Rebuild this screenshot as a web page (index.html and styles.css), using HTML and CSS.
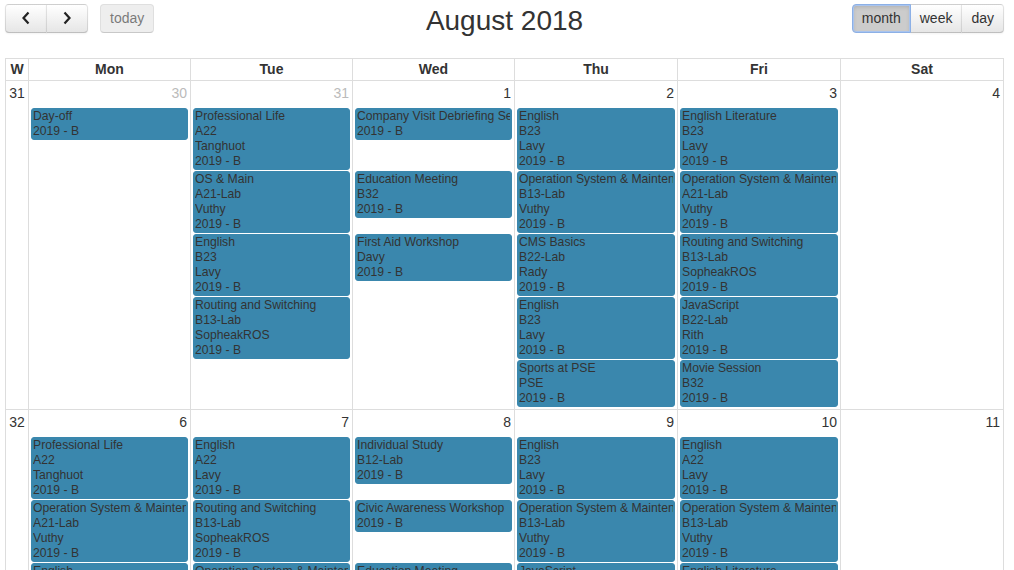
FILE: index.html
```html
<!DOCTYPE html>
<html lang="en">
<head>
<meta charset="utf-8">
<title>August 2018</title>
<link rel="stylesheet" href="styles.css">
</head>
<body>
<div class="page">
  <div class="toolbar">
    <div class="tb-left">
      <div class="btn-group">
        <button class="btn first icon-btn" aria-label="prev"><svg class="chev" width="10" height="14" viewBox="0 0 10 14"><polyline points="7.5,1.5 2.5,7 7.5,12.5" fill="none" stroke="#222" stroke-width="2.2"/></svg></button>
        <button class="btn last icon-btn" aria-label="next"><svg class="chev" width="10" height="14" viewBox="0 0 10 14"><polyline points="2.5,1.5 7.5,7 2.5,12.5" fill="none" stroke="#222" stroke-width="2.2"/></svg></button>
      </div>
      <button class="btn single disabled">today</button>
    </div>
    <h2 class="title">August 2018</h2>
    <div class="tb-right">
      <div class="btn-group">
        <button class="btn first active">month</button>
        <button class="btn">week</button>
        <button class="btn last">day</button>
      </div>
    </div>
  </div>

  <table class="cal">
    <colgroup>
      <col class="c-wk"><col class="c-162"><col class="c-162"><col class="c-162"><col class="c-163"><col class="c-163"><col>
    </colgroup>
    <thead>
      <tr><th class="wk">W</th><th>Mon</th><th>Tue</th><th>Wed</th><th>Thu</th><th>Fri</th><th>Sat</th></tr>
    </thead>
    <tbody>
      <!-- Week 31 -->
      <tr class="num-row">
        <td class="wk" rowspan="6">31</td>
        <td class="num other">30</td><td class="num other">31</td><td class="num">1</td><td class="num">2</td><td class="num">3</td><td class="num">4</td>
      </tr>
      <tr class="ev-row">
        <td><div class="ev"><span>Day-off</span><span>2019 - B</span></div></td>
        <td><div class="ev"><span>Professional Life</span><span>A22</span><span>Tanghuot</span><span>2019 - B</span></div></td>
        <td><div class="ev"><span>Company Visit Debriefing Session</span><span>2019 - B</span></div></td>
        <td><div class="ev"><span>English</span><span>B23</span><span>Lavy</span><span>2019 - B</span></div></td>
        <td><div class="ev"><span>English Literature</span><span>B23</span><span>Lavy</span><span>2019 - B</span></div></td>
        <td></td>
      </tr>
      <tr class="ev-row">
        <td></td>
        <td><div class="ev"><span>OS &amp; Main</span><span>A21-Lab</span><span>Vuthy</span><span>2019 - B</span></div></td>
        <td><div class="ev"><span>Education Meeting</span><span>B32</span><span>2019 - B</span></div></td>
        <td><div class="ev"><span>Operation System &amp; Maintenance</span><span>B13-Lab</span><span>Vuthy</span><span>2019 - B</span></div></td>
        <td><div class="ev"><span>Operation System &amp; Maintenance</span><span>A21-Lab</span><span>Vuthy</span><span>2019 - B</span></div></td>
        <td></td>
      </tr>
      <tr class="ev-row">
        <td></td>
        <td><div class="ev"><span>English</span><span>B23</span><span>Lavy</span><span>2019 - B</span></div></td>
        <td><div class="ev"><span>First Aid Workshop</span><span>Davy</span><span>2019 - B</span></div></td>
        <td><div class="ev"><span>CMS Basics</span><span>B22-Lab</span><span>Rady</span><span>2019 - B</span></div></td>
        <td><div class="ev"><span>Routing and Switching</span><span>B13-Lab</span><span>SopheakROS</span><span>2019 - B</span></div></td>
        <td></td>
      </tr>
      <tr class="ev-row">
        <td></td>
        <td><div class="ev"><span>Routing and Switching</span><span>B13-Lab</span><span>SopheakROS</span><span>2019 - B</span></div></td>
        <td></td>
        <td><div class="ev"><span>English</span><span>B23</span><span>Lavy</span><span>2019 - B</span></div></td>
        <td><div class="ev"><span>JavaScript</span><span>B22-Lab</span><span>Rith</span><span>2019 - B</span></div></td>
        <td></td>
      </tr>
      <tr class="ev-row last">
        <td></td>
        <td></td>
        <td></td>
        <td><div class="ev"><span>Sports at PSE</span><span>PSE</span><span>2019 - B</span></div></td>
        <td><div class="ev"><span>Movie Session</span><span>B32</span><span>2019 - B</span></div></td>
        <td></td>
      </tr>

      <!-- Week 32 -->
      <tr class="num-row">
        <td class="wk" rowspan="4">32</td>
        <td class="num">6</td><td class="num">7</td><td class="num">8</td><td class="num">9</td><td class="num">10</td><td class="num">11</td>
      </tr>
      <tr class="ev-row">
        <td><div class="ev"><span>Professional Life</span><span>A22</span><span>Tanghuot</span><span>2019 - B</span></div></td>
        <td><div class="ev"><span>English</span><span>A22</span><span>Lavy</span><span>2019 - B</span></div></td>
        <td><div class="ev"><span>Individual Study</span><span>B12-Lab</span><span>2019 - B</span></div></td>
        <td><div class="ev"><span>English</span><span>B23</span><span>Lavy</span><span>2019 - B</span></div></td>
        <td><div class="ev"><span>English</span><span>A22</span><span>Lavy</span><span>2019 - B</span></div></td>
        <td></td>
      </tr>
      <tr class="ev-row">
        <td><div class="ev"><span>Operation System &amp; Maintenance</span><span>A21-Lab</span><span>Vuthy</span><span>2019 - B</span></div></td>
        <td><div class="ev"><span>Routing and Switching</span><span>B13-Lab</span><span>SopheakROS</span><span>2019 - B</span></div></td>
        <td><div class="ev"><span>Civic Awareness Workshop</span><span>2019 - B</span></div></td>
        <td><div class="ev"><span>Operation System &amp; Maintenance</span><span>B13-Lab</span><span>Vuthy</span><span>2019 - B</span></div></td>
        <td><div class="ev"><span>Operation System &amp; Maintenance</span><span>B13-Lab</span><span>Vuthy</span><span>2019 - B</span></div></td>
        <td></td>
      </tr>
      <tr class="ev-row last">
        <td><div class="ev"><span>English</span><span>B23</span><span>Lavy</span><span>2019 - B</span></div></td>
        <td><div class="ev"><span>Operation System &amp; Maintenance</span><span>A21-Lab</span><span>Vuthy</span><span>2019 - B</span></div></td>
        <td><div class="ev"><span>Education Meeting</span><span>B32</span><span>2019 - B</span></div></td>
        <td><div class="ev"><span>JavaScript</span><span>B22-Lab</span><span>Rith</span><span>2019 - B</span></div></td>
        <td><div class="ev"><span>English Literature</span><span>B23</span><span>Lavy</span><span>2019 - B</span></div></td>
        <td></td>
      </tr>
    </tbody>
  </table>
</div>
</body>
</html>
```

FILE: styles.css
```css
html {
  overflow: hidden;
}

body {
  margin: 0;
  font-family: "Liberation Sans", Arial, sans-serif;
  font-size: 14px;
  color: #333;
  background: #fff;
}

.page {
  padding: 4px 10px 0 5px;
}

/* ---------- toolbar ---------- */
.toolbar {
  display: grid;
  grid-template-columns: 1fr auto 1fr;
  align-items: start;
  height: 54px;
}

.tb-left {
  display: flex;
  align-items: flex-start;
  gap: 12px;
}

.tb-right {
  justify-self: end;
  display: flex;
}

.title {
  margin: 0;
  font-size: 28px;
  font-weight: normal;
  line-height: 33px;
  color: #333;
}

.btn-group {
  display: flex;
}

.btn {
  box-sizing: border-box;
  height: 29px;
  margin: 0;
  padding: 0 9px;
  font-family: "Liberation Sans", Arial, sans-serif;
  font-size: 14px;
  line-height: 27px;
  color: #333;
  background-color: #f5f5f5;
  background-image: linear-gradient(to bottom, #ffffff, #e6e6e6);
  border: 1px solid;
  border-color: rgba(0, 0, 0, 0.1) rgba(0, 0, 0, 0.1) rgba(0, 0, 0, 0.25);
  border-radius: 0;
  box-shadow: inset 0 1px 0 rgba(255, 255, 255, 0.2), 0 1px 2px rgba(0, 0, 0, 0.05);
  cursor: pointer;
}

.btn-group .btn + .btn {
  margin-left: -1px;
}

.btn.first {
  border-radius: 4px 0 0 4px;
}

.btn.last {
  border-radius: 0 4px 4px 0;
}

.btn.single {
  border-radius: 4px;
  padding: 0 9px;
}

.btn.icon-btn {
  width: 42px;
  padding: 0;
  display: flex;
  align-items: center;
  justify-content: center;
}

.chev {
  display: block;
  margin-top: -1px;
}

.btn.disabled {
  background-image: none;
  background-color: #e6e6e6;
  opacity: 0.65;
  box-shadow: none;
  cursor: default;
}

.btn.active {
  background-image: none;
  background-color: #cccccc;
  border-color: #8cb0e6;
  box-shadow: inset 0 0 0 1px #a9c4ee, inset 0 2px 4px rgba(0, 0, 0, 0.15);
  position: relative;
  z-index: 1;
}

/* ---------- calendar ---------- */
.cal {
  width: 999px;
  table-layout: fixed;
  border-collapse: collapse;
  border: 1px solid #ddd;
}

.c-wk {
  width: 23px;
}

.c-162 {
  width: 162px;
}

.c-163 {
  width: 163px;
}

.cal th {
  border: 1px solid #ddd;
  padding: 2px 0 3px;
  line-height: 16px;
  font-weight: bold;
  text-align: center;
}

.cal td {
  padding: 0;
  border-left: 1px solid #ddd;
  border-right: 1px solid #ddd;
  vertical-align: top;
}

.cal td.wk {
  text-align: center;
  padding-top: 4px;
  line-height: 16px;
  border-top: 1px solid #ddd;
}

.num-row td {
  border-top: 1px solid #ddd;
}

.cal td.num {
  text-align: right;
  padding: 4px 3px 6px 0;
  line-height: 16px;
  color: #333;
}

.cal td.num.other {
  color: #bbb;
}

.ev-row.last td {
  padding-bottom: 2px;
}

.ev {
  margin: 1px 2px 0;
  padding: 0 1px;
  border: 1px solid #3a87ad;
  background-color: #3a87ad;
  border-radius: 3px;
  font-size: 12.2px;
  line-height: 15px;
  color: #333;
  white-space: nowrap;
  overflow: hidden;
}

.ev span {
  display: block;
  overflow: hidden;
}
```
